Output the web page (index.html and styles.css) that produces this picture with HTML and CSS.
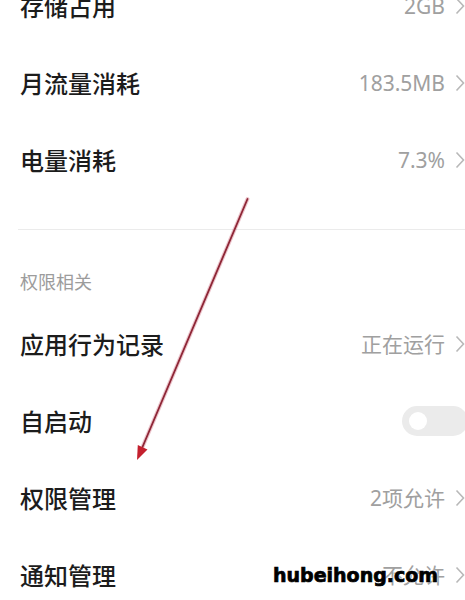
FILE: index.html
```html
<!DOCTYPE html>
<html lang="zh-CN">
<head>
<meta charset="utf-8">
<title>应用详情</title>
<link rel="stylesheet" href="styles.css">
</head>
<body>
<div class="page">
  <div class="row">
    <span class="title">存储占用</span>
    <span class="meta"><span class="value">2GB</span><svg class="chev" viewBox="0 0 10 18"><polyline points="1.5,1.5 8.5,9 1.5,16.5"/></svg></span>
  </div>
  <div class="row">
    <span class="title">月流量消耗</span>
    <span class="meta"><span class="value">183.5MB</span><svg class="chev" viewBox="0 0 10 18"><polyline points="1.5,1.5 8.5,9 1.5,16.5"/></svg></span>
  </div>
  <div class="row">
    <span class="title">电量消耗</span>
    <span class="meta"><span class="value">7.3%</span><svg class="chev" viewBox="0 0 10 18"><polyline points="1.5,1.5 8.5,9 1.5,16.5"/></svg></span>
  </div>
  <div class="divider"></div>
  <div class="section">权限相关</div>
  <div class="row">
    <span class="title">应用行为记录</span>
    <span class="meta"><span class="value">正在运行</span><svg class="chev" viewBox="0 0 10 18"><polyline points="1.5,1.5 8.5,9 1.5,16.5"/></svg></span>
  </div>
  <div class="row">
    <span class="title">自启动</span>
    <span class="meta"><span class="toggle"><span class="knob"></span></span></span>
  </div>
  <div class="row">
    <span class="title">权限管理</span>
    <span class="meta"><span class="value">2项允许</span><svg class="chev" viewBox="0 0 10 18"><polyline points="1.5,1.5 8.5,9 1.5,16.5"/></svg></span>
  </div>
  <div class="row">
    <span class="title">通知管理</span>
    <span class="meta"><span class="value">不允许</span><svg class="chev" viewBox="0 0 10 18"><polyline points="1.5,1.5 8.5,9 1.5,16.5"/></svg></span>
  </div>
</div>

<svg class="arrow" viewBox="0 0 465 600" width="465" height="600">
  <line x1="247.5" y1="199" x2="142.5" y2="447" class="shaft-halo"/>
  <line x1="247.5" y1="199" x2="142.5" y2="447" class="shaft"/>
  <polygon points="137,460 147.5,449.5 137.8,445" class="head"/>
</svg>

<div class="watermark">hubeihong.com</div>
</body>
</html>
```

FILE: styles.css
```css
html, body {
  margin: 0;
  padding: 0;
  background: #ffffff;
  overflow: hidden;
}

body {
  width: 465px;
  height: 600px;
  position: relative;
  font-family: "Noto Sans", "Noto Sans CJK SC", sans-serif;
}

.page {
  margin-top: -33px;
}

.row {
  height: 77px;
  display: flex;
  align-items: center;
  justify-content: space-between;
  padding-left: 20px;
}

.title {
  font-family: "Noto Sans CJK SC", sans-serif;
  font-size: 24px;
  line-height: 24px;
  font-weight: 500;
  color: #1c1c1c;
}

.meta {
  display: flex;
  align-items: center;
}

.value {
  font-family: "Noto Sans", "Noto Sans CJK SC", sans-serif;
  font-size: 21px;
  line-height: 24px;
  color: #a0a0a0;
  margin-right: 10px;
}

.chev {
  width: 10px;
  height: 18px;
  margin-right: 0;
}

.chev polyline {
  fill: none;
  stroke: #b8b8b8;
  stroke-width: 1.6;
}

.toggle {
  width: 66px;
  height: 30px;
  border-radius: 15px;
  background: #ebebeb;
  margin-right: -3px;
  display: flex;
  align-items: center;
  padding-left: 7px;
  box-sizing: border-box;
}

.knob {
  width: 18px;
  height: 18px;
  border-radius: 50%;
  background: #ffffff;
}

.divider {
  height: 1px;
  background: #ebebeb;
  margin: 31px 0 0 18px;
}

.section {
  font-family: "Noto Sans CJK SC", sans-serif;
  font-size: 18px;
  line-height: 24px;
  color: #9c9c9c;
  padding: 39px 20px 12.5px;
}

.arrow {
  position: absolute;
  left: 0;
  top: 0;
  pointer-events: none;
}

.shaft-halo {
  stroke: rgba(200, 90, 110, 0.35);
  stroke-width: 4;
  stroke-linecap: round;
}

.shaft {
  stroke: #8e2636;
  stroke-width: 1.8;
  stroke-linecap: round;
}

.head {
  fill: #c4202e;
}

.watermark {
  position: absolute;
  left: 273px;
  top: 563px;
  font-family: "DejaVu Sans", sans-serif;
  font-weight: bold;
  font-size: 19px;
  line-height: 24px;
  color: #000000;
  -webkit-text-stroke: 0.7px #000000;
  text-shadow: 0 0 2px #ffffff, 0 0 2px #ffffff;
}
```
